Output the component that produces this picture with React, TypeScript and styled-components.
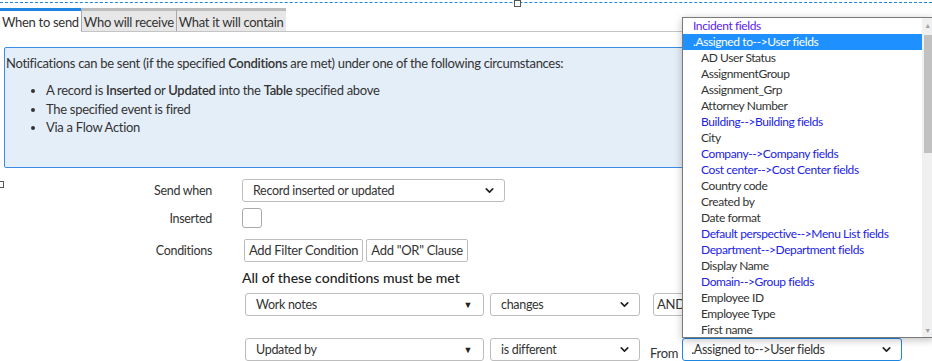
import React from 'react';
import styled, { createGlobalStyle } from 'styled-components';
import { ChevronDown } from 'lucide-react';

const GlobalStyle = createGlobalStyle`
    body {
        margin: 0;
        font-family: Lato, 'Open Sans', sans-serif;
        color: #333;
        background: #fff;
    }
`;

interface FieldItem {
    label: string;
    kind: 'header' | 'ref' | 'field';
    selected?: boolean;
}

const fieldItems: FieldItem[] = [
    { label: 'Incident fields', kind: 'header' },
    { label: '.Assigned to-->User fields', kind: 'header', selected: true },
    { label: 'AD User Status', kind: 'field' },
    { label: 'AssignmentGroup', kind: 'field' },
    { label: 'Assignment_Grp', kind: 'field' },
    { label: 'Attorney Number', kind: 'field' },
    { label: 'Building-->Building fields', kind: 'ref' },
    { label: 'City', kind: 'field' },
    { label: 'Company-->Company fields', kind: 'ref' },
    { label: 'Cost center-->Cost Center fields', kind: 'ref' },
    { label: 'Country code', kind: 'field' },
    { label: 'Created by', kind: 'field' },
    { label: 'Date format', kind: 'field' },
    { label: 'Default perspective-->Menu List fields', kind: 'ref' },
    { label: 'Department-->Department fields', kind: 'ref' },
    { label: 'Display Name', kind: 'field' },
    { label: 'Domain-->Group fields', kind: 'ref' },
    { label: 'Employee ID', kind: 'field' },
    { label: 'Employee Type', kind: 'field' },
    { label: 'First name', kind: 'field' },
];

const App = () => {
    return (
        <Page>
            <GlobalStyle />
            <SelectionRule>
                <Handle style={{ left: 514 }} />
            </SelectionRule>
            <TabBar>
                <Tab active>When to send</Tab>
                <Tab>Who will receive</Tab>
                <Tab>What it will contain</Tab>
                <TabFiller />
            </TabBar>

            <InfoBox>
                <p>
                    Notifications can be sent (if the specified <b>Conditions</b> are met) under one of the following
                    circumstances:
                </p>
                <ul>
                    <li>
                        A record is <b>Inserted</b> or <b>Updated</b> into the <b>Table</b> specified above
                    </li>
                    <li>The specified event is fired</li>
                    <li>Via a Flow Action</li>
                </ul>
            </InfoBox>
            <SideHandle />

            <Form>
                <FormRow>
                    <Label>Send when</Label>
                    <SelectBox width={263}>
                        Record inserted or updated
                        <ChevronDown size={13} strokeWidth={3} color="#222" />
                    </SelectBox>
                </FormRow>
                <FormRow>
                    <Label>Inserted</Label>
                    <Checkbox />
                </FormRow>
                <FormRow spaced>
                    <Label>Conditions</Label>
                    <ButtonGroup>
                        <Button>Add Filter Condition</Button>
                        <Button>Add "OR" Clause</Button>
                    </ButtonGroup>
                </FormRow>
            </Form>

            <ConditionBlock>
                <ConditionTitle>All of these conditions must be met</ConditionTitle>
                <ConditionRow>
                    <SelectBox width={239}>
                        Work notes
                        <Triangle>▼</Triangle>
                    </SelectBox>
                    <SelectBox width={150}>
                        changes
                        <ChevronDown size={13} strokeWidth={3} color="#222" />
                    </SelectBox>
                    <AndButton>AND</AndButton>
                </ConditionRow>
                <ConditionRow>
                    <SelectBox width={239}>
                        Updated by
                        <Triangle>▼</Triangle>
                    </SelectBox>
                    <SelectBox width={150}>
                        is different
                        <ChevronDown size={13} strokeWidth={3} color="#222" />
                    </SelectBox>
                    <FromLabel>From</FromLabel>
                    <SelectBox width={220} focused>
                        .Assigned to--&gt;User fields
                        <ChevronDown size={13} strokeWidth={3} color="#222" />
                    </SelectBox>
                </ConditionRow>
            </ConditionBlock>

            <FieldList>
                <ListItems>
                    {fieldItems.map((item) => (
                        <ListItem key={item.label} kind={item.kind} selected={item.selected}>
                            {item.label}
                        </ListItem>
                    ))}
                </ListItems>
                <Scrollbar>
                    <ScrollArrow>▲</ScrollArrow>
                    <ScrollTrack>
                        <ScrollThumb />
                    </ScrollTrack>
                    <ScrollArrow>▼</ScrollArrow>
                </Scrollbar>
            </FieldList>
        </Page>
    );
};

const Page = styled.div`
    position: relative;
    width: 932px;
    height: 361px;
    overflow: hidden;
    font-size: 13px;
    letter-spacing: -0.3px;
`;

const SelectionRule = styled.div`
    position: relative;
    margin-top: 2px;
    border-top: 1px dashed #1f86e0;
    height: 0;
`;

const Handle = styled.span`
    position: absolute;
    top: -3px;
    width: 5px;
    height: 5px;
    border: 1px solid #555;
    background: #fff;
`;

const SideHandle = styled.span`
    position: absolute;
    left: -3px;
    top: 181px;
    width: 5px;
    height: 5px;
    border: 1px solid #555;
    background: #fff;
`;

const TabBar = styled.div`
    display: flex;
    margin-top: 5px;
    height: 24px;
`;

const Tab = styled.div<{ active?: boolean }>`
    box-sizing: border-box;
    padding: 2px 2px 0;
    font-size: 13px;
    line-height: 19px;
    color: #333;
    white-space: nowrap;
    border-top: 3px solid ${(p) => (p.active ? '#1f86e0' : '#bcbcbc')};
    border-left: ${(p) => (p.active ? 'none' : '1px solid #a9a9a9')};
    border-bottom: ${(p) => (p.active ? 'none' : '1px solid #c4c4c4')};
    background: ${(p) => (p.active ? '#fff' : '#e7e7e7')};
`;

const TabFiller = styled.div`
    flex: 1;
    border-bottom: 1px solid #c4c4c4;
`;

const InfoBox = styled.div`
    box-sizing: border-box;
    margin: 15px 0 0 4px;
    width: 700px;
    height: 121px;
    border: 1px solid #3a8de2;
    border-radius: 2px;
    background: #e4eef9;
    color: #333;
    font-size: 13px;
    padding: 7px 0 0 1px;

    p {
        margin: 0 0 10px;
        line-height: 16px;
    }

    ul {
        margin: 0;
        padding-left: 40px;
    }

    li {
        line-height: 18.5px;
    }

    b {
        font-weight: 600;
    }
`;

const Form = styled.div`
    display: flex;
    flex-direction: column;
    gap: 6px;
    margin-top: 11px;
`;

const FormRow = styled.div<{ spaced?: boolean }>`
    display: grid;
    grid-template-columns: 212px auto;
    column-gap: 30px;
    align-items: center;
    margin-top: ${(p) => (p.spaced ? '5px' : '0')};
`;

const Label = styled.div`
    text-align: right;
    font-size: 12.5px;
    color: #333;
`;

const SelectBox = styled.div<{ width: number; focused?: boolean }>`
    box-sizing: border-box;
    display: flex;
    align-items: center;
    justify-content: space-between;
    width: ${(p) => p.width}px;
    height: 23px;
    padding: 0 8px 0 ${(p) => (p.focused ? 8 : 10)}px;
    border: 1px solid ${(p) => (p.focused ? '#1f86e0' : '#bdbdbd')};
    border-radius: 3px;
    background: #fff;
    font-size: 12.5px;
    color: #333;
    white-space: nowrap;
`;

const Triangle = styled.span`
    font-size: 9px;
    color: #222;
    margin-right: 3px;
`;

const Checkbox = styled.div`
    box-sizing: border-box;
    width: 20px;
    height: 20px;
    border: 1px solid #aaa;
    border-radius: 3px;
    background: #fff;
`;

const ButtonGroup = styled.div`
    display: flex;
    gap: 3px;
    padding-left: 2px;
`;

const Button = styled.div`
    box-sizing: border-box;
    height: 23px;
    padding: 0 4px;
    line-height: 21px;
    border: 1px solid #bdbdbd;
    border-radius: 2px;
    background: #fff;
    font-size: 13px;
    color: #333;
`;

const ConditionBlock = styled.div`
    margin: 7px 0 0 242px;
`;

const ConditionTitle = styled.div`
    font-size: 14px;
    line-height: 18px;
    color: #222;
    font-weight: 500;
    letter-spacing: 0;
`;

const ConditionRow = styled.div`
    display: flex;
    align-items: flex-start;
    gap: 6px;
    margin: 6px 0 0 3px;

    & + & {
        margin-top: 22px;
    }
`;

const AndButton = styled.div`
    box-sizing: border-box;
    margin-left: 7px;
    height: 23px;
    padding: 0 8px 0 3px;
    line-height: 21px;
    border: 1px solid #bdbdbd;
    border-radius: 3px;
    font-size: 13px;
    color: #333;
`;

const FromLabel = styled.div`
    margin: 7px -2px 0 4px;
    line-height: 16px;
    font-size: 13px;
    color: #333;
`;

const FieldList = styled.div`
    position: absolute;
    left: 682px;
    top: 17px;
    box-sizing: border-box;
    width: 252px;
    height: 321px;
    display: flex;
    border: 1px solid #7a7a7a;
    background: #fff;
    box-shadow: 0 2px 8px rgba(0, 0, 0, 0.25);
`;

const ListItems = styled.div`
    flex: 1;
    overflow: hidden;
`;

const ListItem = styled.div<{ kind: 'header' | 'ref' | 'field'; selected?: boolean }>`
    height: 16px;
    line-height: 16px;
    font-size: 12px;
    letter-spacing: -0.4px;
    white-space: nowrap;
    padding-left: ${(p) => (p.kind === 'header' ? '10px' : '18px')};
    color: ${(p) =>
        p.selected ? '#fff' : p.kind === 'header' ? '#5a1af2' : p.kind === 'ref' ? '#2222e6' : '#333'};
    background: ${(p) => (p.selected ? '#1e90ff' : 'transparent')};
`;

const Scrollbar = styled.div`
    width: 11px;
    display: flex;
    flex-direction: column;
    background: #f0f0f0;
`;

const ScrollArrow = styled.div`
    height: 14px;
    font-size: 7px;
    line-height: 14px;
    text-align: center;
    color: #a3a3a3;
`;

const ScrollTrack = styled.div`
    flex: 1;
    padding: 3px 1px 0 2px;
`;

const ScrollThumb = styled.div`
    height: 118px;
    background: #c1c1c1;
`;

export default App;
